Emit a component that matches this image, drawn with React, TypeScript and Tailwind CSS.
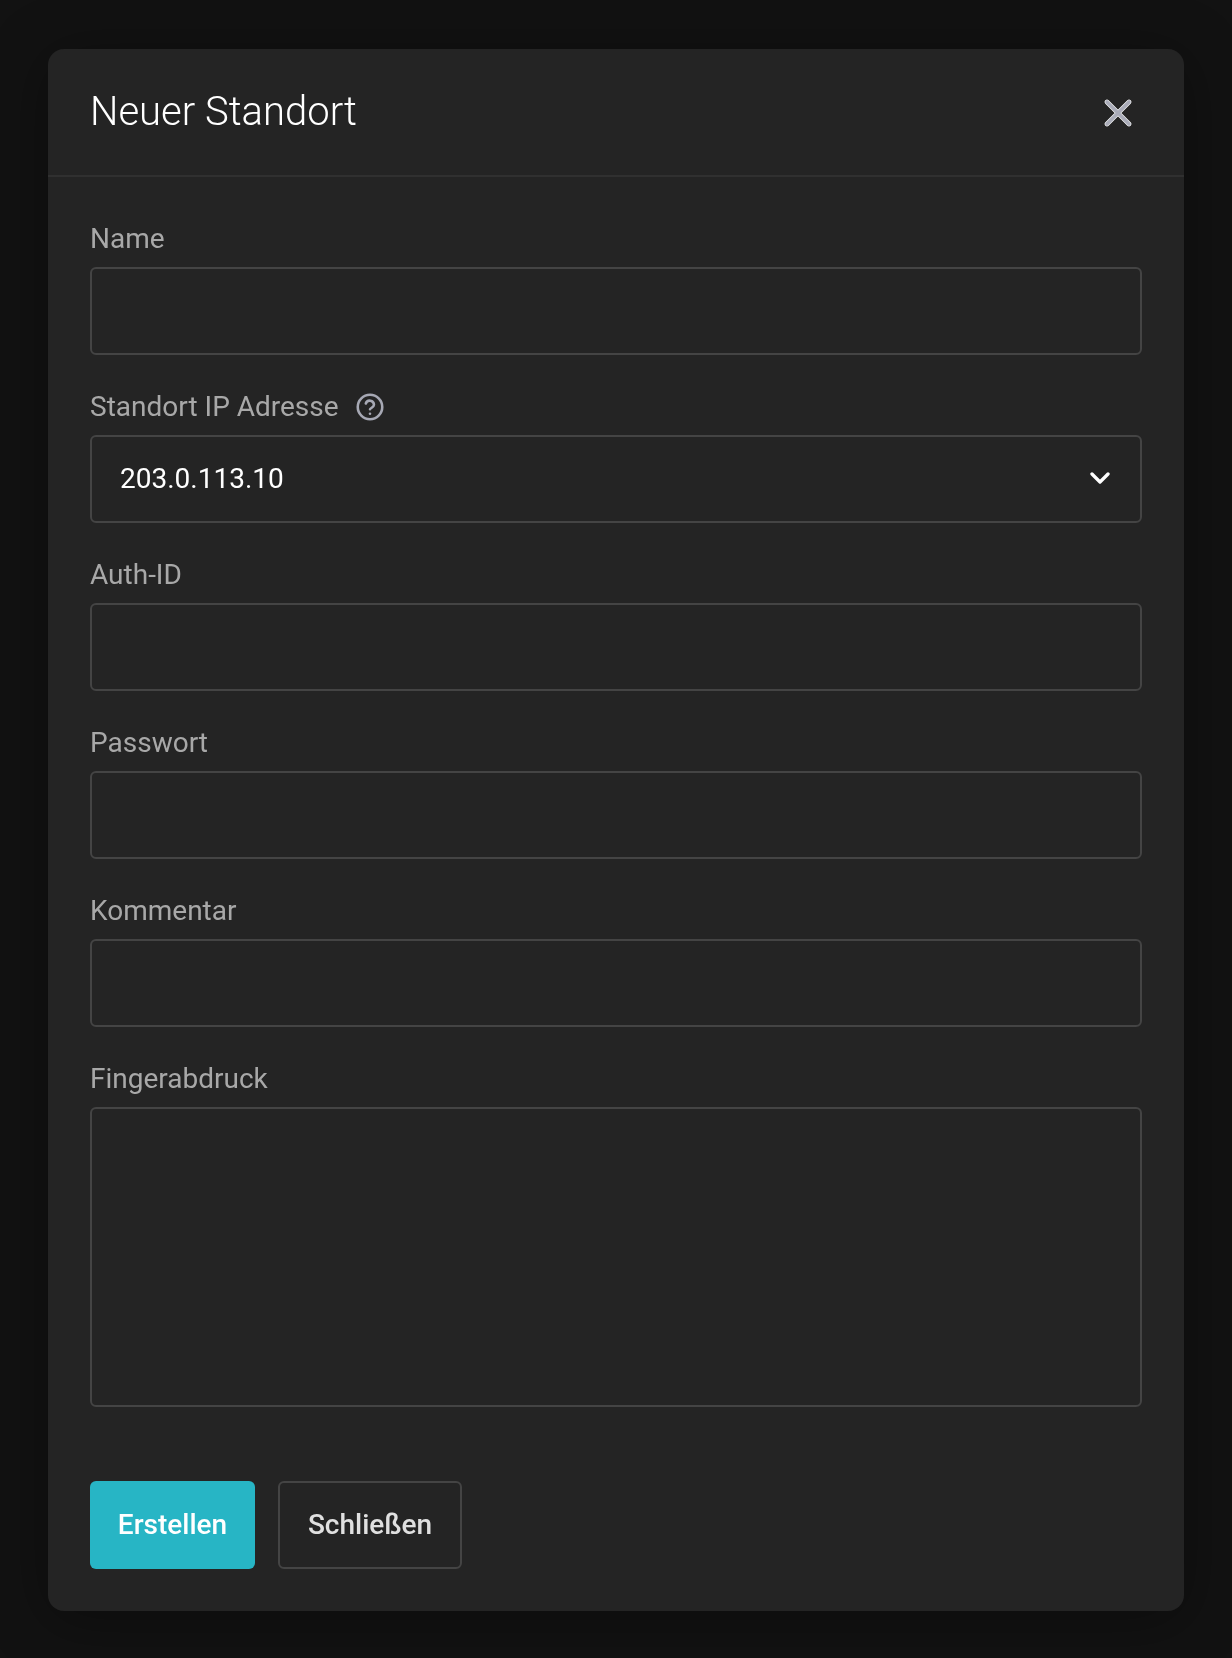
import React from 'react';
import { ChevronDown } from 'lucide-react';

const inputCls =
  'block w-full h-[88px] rounded-[6px] border-2 border-[#444444] bg-transparent px-[28px] text-[28px] text-white outline-none';

const Field: React.FC<{ label: string; help?: boolean; children: React.ReactNode }> = ({ label, help, children }) => (
  <div className="mb-[25px]">
    <label className="flex items-center h-[55px] pb-[1px] text-[28px] leading-[32px] text-[#a8a8a8]">
      {label}
      {help && (
        <svg className="ml-[17px] w-[28px] h-[28px]" viewBox="0 0 24 24" fill="none" stroke="#a6a8b4" strokeWidth="2.2" strokeLinecap="round" strokeLinejoin="round">
          <circle cx="12" cy="12" r="10.5" />
          <path d="M8.4 9a3.6 3.6 0 0 1 7 1.1c0 2.3-3.4 2.9-3.4 3.9" />
          <path d="M12 17.8h.01" />
        </svg>
      )}
    </label>
    {children}
  </div>
);

export default function App() {
  return (
    <div className="min-h-[1658px] bg-[#121212] px-[48px] pt-[49px] font-['Roboto',sans-serif]">
      <div className="flex flex-col w-[1136px] h-[1562px] rounded-[16px] bg-[#242424] shadow-[0_8px_60px_rgba(0,0,0,0.35)] will-change-transform">
        <div className="flex items-center justify-between h-[128px] border-b-2 border-[#303030] pl-[42px] pr-[52px]">
          <h2 className="text-[40px] font-light text-white">Neuer Standort</h2>
          <button className="flex items-center justify-center w-[28px] h-[28px] mt-[2px]">
            <svg viewBox="0 0 28 28" className="w-[28px] h-[28px]" fill="none" strokeLinecap="round">
              <path d="M3 3L25 25M25 3L3 25" stroke="#ffffff" strokeWidth="4.6" />
              <path d="M3 3L25 25M25 3L3 25" stroke="#a9abb8" strokeWidth="3.6" />
            </svg>
          </button>
        </div>

        <div className="flex-1 px-[42px] pt-[35px]">
          <Field label="Name">
            <input className={inputCls} />
          </Field>
          <Field label="Standort IP Adresse" help>
            <div className="relative">
              <select defaultValue="203.0.113.10" className={`${inputCls} appearance-none`}>
                <option>203.0.113.10</option>
              </select>
              <ChevronDown className="absolute right-[26px] top-[27px] w-[32px] h-[32px] text-white pointer-events-none" strokeWidth={2.5} />
            </div>
          </Field>
          <Field label="Auth-ID">
            <input className={inputCls} />
          </Field>
          <Field label="Passwort">
            <input type="password" className={inputCls} />
          </Field>
          <Field label="Kommentar">
            <input className={inputCls} />
          </Field>
          <Field label="Fingerabdruck">
            <textarea className="block w-full h-[300px] rounded-[6px] border-2 border-[#444444] bg-transparent p-[28px] text-[28px] text-white outline-none resize-none" />
          </Field>

          <div className="flex gap-[23px] mt-[74px]">
            <button className="w-[165px] h-[88px] rounded-[6px] bg-[#27b5c5] text-[28px] font-medium text-white">Erstellen</button>
            <button className="w-[184px] h-[88px] rounded-[6px] border-2 border-[#444444] text-[28px] font-medium text-[#e0e0e0]">Schließen</button>
          </div>
        </div>
      </div>
    </div>
  );
}
